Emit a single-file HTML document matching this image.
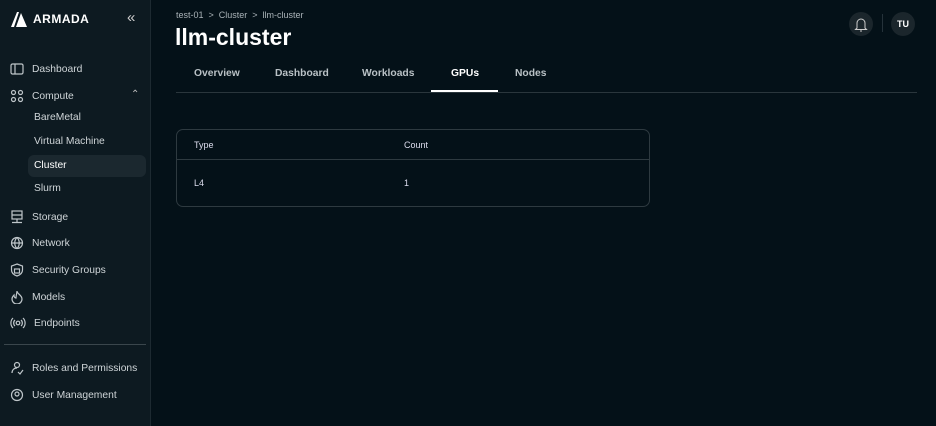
<!DOCTYPE html>
<html><head><meta charset="utf-8"><style>
*{margin:0;padding:0;box-sizing:border-box}
body{width:936px;height:426px;overflow:hidden;background:#041118;font-family:"Liberation Sans",sans-serif;color:#e6e9eb;position:relative}
.sb{position:absolute;left:0;top:0;width:151px;height:426px;background:#0d1a21;border-right:1px solid #1d2a31}
.it{position:absolute;left:10px;font-size:10.3px;color:#cfd5d8;display:flex;align-items:center}
.it svg{width:14px;height:14px;margin-right:8px;fill:none;stroke:#bfc6ca;stroke-width:1.2}
.sub{position:absolute;left:34px;font-size:10.3px;color:#cfd5d8}
.tab{position:absolute;top:68px;font-size:10.3px;font-weight:bold;color:#b9c1c5}
</style></head><body>
<div class="sb">
  <svg style="position:absolute;left:10px;top:11px" width="20" height="16" viewBox="0 0 20 16"><path d="M1 16 L7 1 L9 1 L4 16Z M6 16 L11 2 L17 16Z" fill="#fff"/></svg>
  <div style="position:absolute;left:33px;top:12px;font-size:12px;font-weight:bold;letter-spacing:0.5px;color:#fff">ARMADA</div>
  <div style="position:absolute;left:127px;top:9px;font-size:15px;color:#ccc">«</div>
  <div class="it" style="top:62px"><svg viewBox="0 0 14 14"><rect x="1" y="2" width="12" height="10" rx="1.5"/><path d="M5 2v10"/></svg>Dashboard</div>
  <div class="it" style="top:89px"><svg viewBox="0 0 14 14"><circle cx="3.5" cy="3.5" r="2"/><circle cx="10.5" cy="3.5" r="2"/><circle cx="3.5" cy="10.5" r="2"/><circle cx="10.5" cy="10.5" r="2"/></svg>Compute</div>
  <div style="position:absolute;left:131px;top:89px;font-size:10px;color:#bbb">⌃</div>
  <div class="sub" style="top:112px">BareMetal</div>
  <div class="sub" style="top:136px">Virtual Machine</div>
  <div style="position:absolute;left:28px;top:155px;width:118px;height:22px;background:#1b282f;border-radius:6px"></div>
  <div class="sub" style="top:160px;color:#fff">Cluster</div>
  <div class="sub" style="top:183px">Slurm</div>
  <div class="it" style="top:210px"><svg viewBox="0 0 14 14"><rect x="2" y="1" width="10" height="8"/><path d="M2 5h10M7 9v3M2 12.5h10"/></svg>Storage</div>
  <div class="it" style="top:236px"><svg viewBox="0 0 14 14"><circle cx="7" cy="7" r="5.5"/><path d="M1.5 7h11M7 1.5c-3 3-3 8 0 11M7 1.5c3 3 3 8 0 11"/></svg>Network</div>
  <div class="it" style="top:263px"><svg viewBox="0 0 14 14"><path d="M7 1L12.5 3v4c0 3-2.5 5-5.5 6C4 12 1.5 10 1.5 7V3Z"/><rect x="4.5" y="6" width="5" height="4"/></svg>Security Groups</div>
  <div class="it" style="top:290px"><svg viewBox="0 0 14 14"><path d="M7 1c0 3 5 4 5 8a5 5 0 0 1-10 0c0-2 1-3 2-4 0 2 1 3 2 3 0-3 1-5 1-7Z"/></svg>Models</div>
  <div class="it" style="top:316px"><svg viewBox="0 0 14 14" style="width:16px"><circle cx="7" cy="7" r="1.8"/><path d="M4 4a4 4 0 0 0 0 6M10 4a4 4 0 0 1 0 6M2 2a7 7 0 0 0 0 10M12 2a7 7 0 0 1 0 10"/></svg>Endpoints</div>
  <div style="position:absolute;left:4px;top:344px;width:142px;height:1px;background:#3a464c"></div>
  <div class="it" style="top:361px"><svg viewBox="0 0 14 14"><circle cx="7" cy="4" r="2.5"/><path d="M2 12c0-3 2-5 5-5M8 11l2 2 3-4"/></svg>Roles and Permissions</div>
  <div class="it" style="top:388px"><svg viewBox="0 0 14 14"><circle cx="7" cy="7" r="5.5"/><circle cx="7" cy="6" r="2"/></svg>User Management</div>
</div>
<div style="position:absolute;left:176px;top:10px;font-size:9px;color:#aab3b8">test-01 &nbsp;&gt;&nbsp; Cluster &nbsp;&gt;&nbsp; llm-cluster</div>
<div style="position:absolute;left:175px;top:24px;font-size:23px;font-weight:bold;color:#fff">llm-cluster</div>
<div class="tab" style="left:194px">Overview</div>
<div class="tab" style="left:275px">Dashboard</div>
<div class="tab" style="left:362px">Workloads</div>
<div class="tab" style="left:451px;color:#fff">GPUs</div>
<div class="tab" style="left:515px">Nodes</div>
<div style="position:absolute;left:176px;top:92px;width:741px;height:1px;background:#2a363c"></div>
<div style="position:absolute;left:431px;top:90px;width:67px;height:2px;background:#fff"></div>
<div style="position:absolute;left:176px;top:129px;width:474px;height:78px;border:1px solid #2e3a40;border-radius:7px">
  <div style="position:absolute;left:17px;top:10px;font-size:9px;color:#dde">Type</div>
  <div style="position:absolute;left:227px;top:10px;font-size:9px;color:#dde">Count</div>
  <div style="position:absolute;left:0;top:29px;width:100%;height:1px;background:#2e3a40"></div>
  <div style="position:absolute;left:17px;top:48px;font-size:9px;color:#dde">L4</div>
  <div style="position:absolute;left:227px;top:48px;font-size:9px;color:#dde">1</div>
</div>
<div style="position:absolute;left:849px;top:12px;width:24px;height:24px;border-radius:50%;background:#1b262c"></div>
<svg style="position:absolute;left:853px;top:15px" width="16" height="18" viewBox="0 0 16 18"><path d="M4 13V8a4 4 0 0 1 8 0v5l1.5 1.5h-11Z M7 16h2" fill="none" stroke="#ccc" stroke-width="1"/></svg>
<div style="position:absolute;left:882px;top:14px;width:1px;height:18px;background:#25323a"></div>
<div style="position:absolute;left:891px;top:12px;width:24px;height:24px;border-radius:50%;background:#1b262c;font-size:9px;font-weight:bold;color:#fff;text-align:center;line-height:24px">TU</div>
</body></html>
